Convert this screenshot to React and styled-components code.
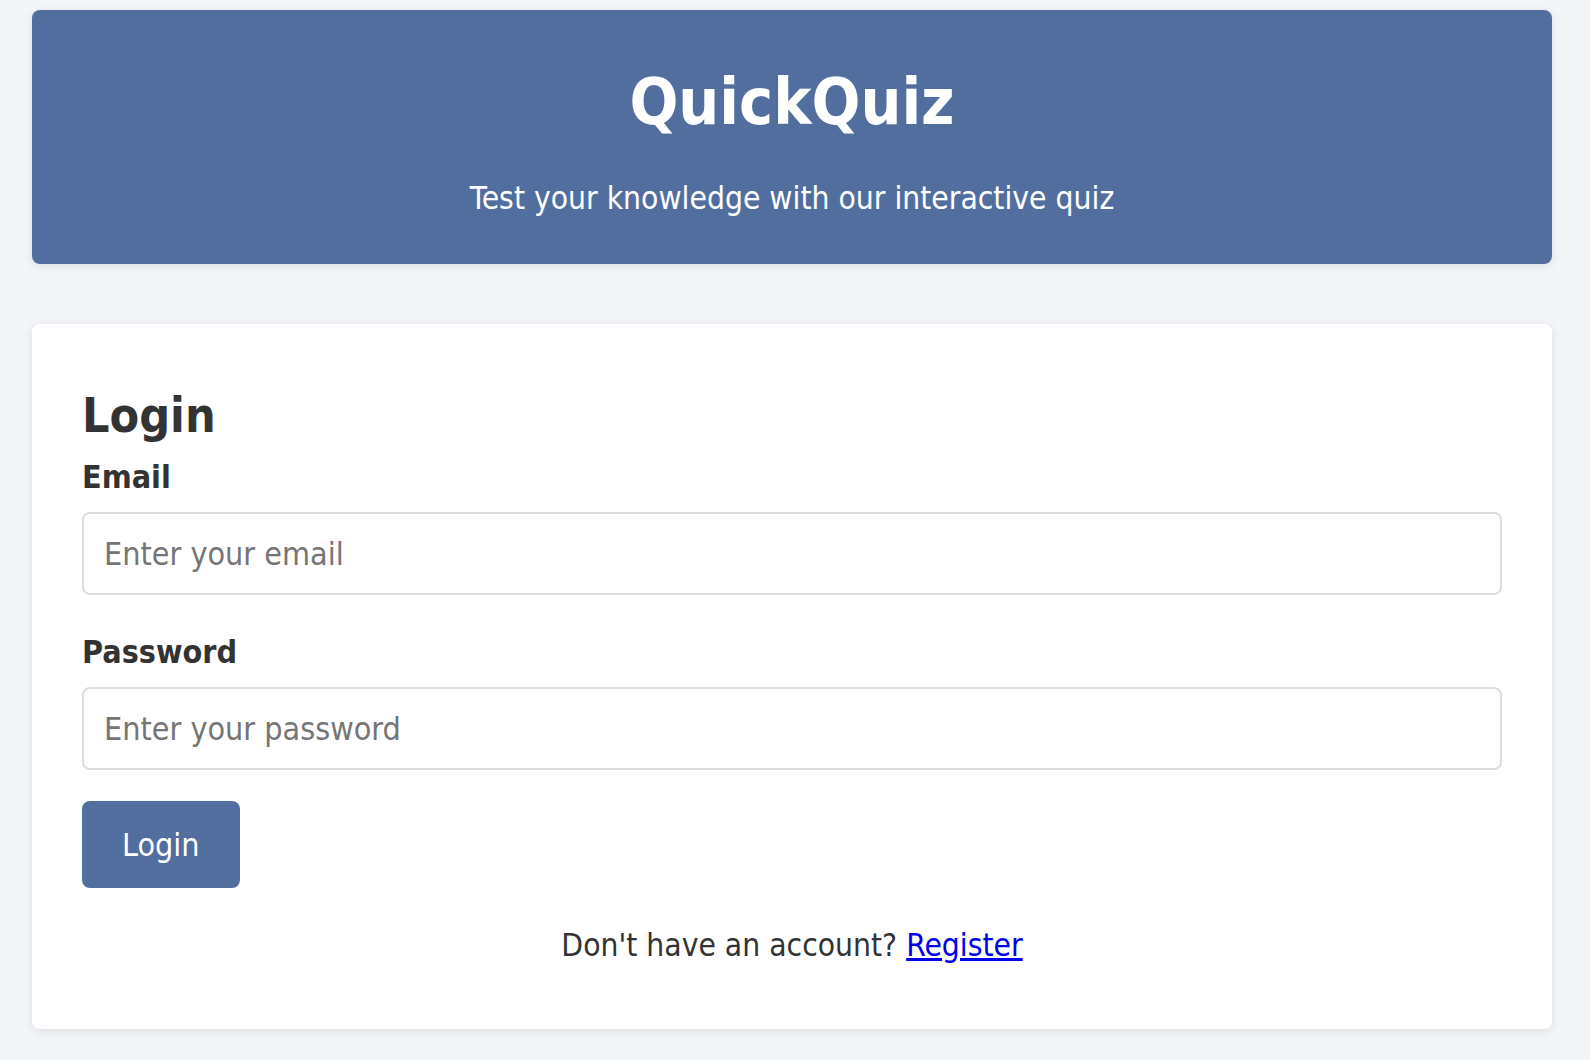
import React from 'react';
import styled, { createGlobalStyle } from 'styled-components';

const GlobalStyle = createGlobalStyle`
    body {
        margin: 0;
        background-color: #f4f5f9;
        font-family: "DejaVu Sans Condensed", "DejaVu Sans", sans-serif;
        font-stretch: condensed;
        color: #333;
    }
    * {
        box-sizing: border-box;
    }
`;

const Page = styled.div`
    padding: 10px 38px 40px 32px;
`;

const Header = styled.header`
    background-color: #516e9f;
    color: white;
    text-align: center;
    border-radius: 8px;
    padding: 54px 20px 46px 20px;
    box-shadow: 0 2px 10px rgba(0,0,0,0.1);
`;

const Title = styled.h1`
    margin: 0;
    font-size: 64px;
    line-height: 77px;
    font-weight: bold;
`;

const Subtitle = styled.p`
    margin: 37px 0 0 0;
    font-size: 31.5px;
    line-height: 40px;
`;

const Card = styled.main`
    margin-top: 60px;
    background-color: white;
    border-radius: 8px;
    padding: 50px;
    box-shadow: 0 2px 10px rgba(0,0,0,0.1);
`;

const H2 = styled.h2`
    margin: 12px 0 13px 0;
    font-size: 48px;
    line-height: 58px;
    font-weight: bold;
`;

const Field = styled.div`
    margin-bottom: 37px;

    &:last-of-type {
        margin-bottom: 31px;
    }
`;

const Label = styled.label`
    display: block;
    margin: 12px 0 15px 0;
    font-size: 32px;
    line-height: 40px;
    font-weight: bold;
`;

const Input = styled.input`
    display: block;
    width: 100%;
    height: 83px;
    padding: 0 20px;
    border: 2px solid #ddd;
    border-radius: 8px;
    font-family: inherit;
    font-stretch: condensed;
    font-size: 32px;
    color: #333;
    outline: none;

    &::placeholder {
        color: #757575;
    }
`;

const Button = styled.button`
    display: block;
    height: 87px;
    padding: 0 40px;
    border: none;
    border-radius: 8px;
    background-color: #516e9f;
    color: white;
    font-family: inherit;
    font-stretch: condensed;
    font-size: 32px;
    cursor: pointer;
`;

const Footer = styled.p`
    margin: 37px 0 14px 0;
    text-align: center;
    font-size: 31.5px;
    line-height: 40px;

    a {
        color: #0000ee;
    }
`;

function App() {
    return (
        <Page>
            <GlobalStyle />
            <Header>
                <Title>QuickQuiz</Title>
                <Subtitle>Test your knowledge with our interactive quiz</Subtitle>
            </Header>
            <Card>
                <H2>Login</H2>
                <form onSubmit={e => e.preventDefault()}>
                    <Field>
                        <Label htmlFor="email">Email</Label>
                        <Input id="email" type="email" placeholder="Enter your email" />
                    </Field>
                    <Field>
                        <Label htmlFor="password">Password</Label>
                        <Input id="password" type="password" placeholder="Enter your password" />
                    </Field>
                    <Button type="submit">Login</Button>
                </form>
                <Footer>
                    Don't have an account? <a href="#register">Register</a>
                </Footer>
            </Card>
        </Page>
    );
}

export default App;
